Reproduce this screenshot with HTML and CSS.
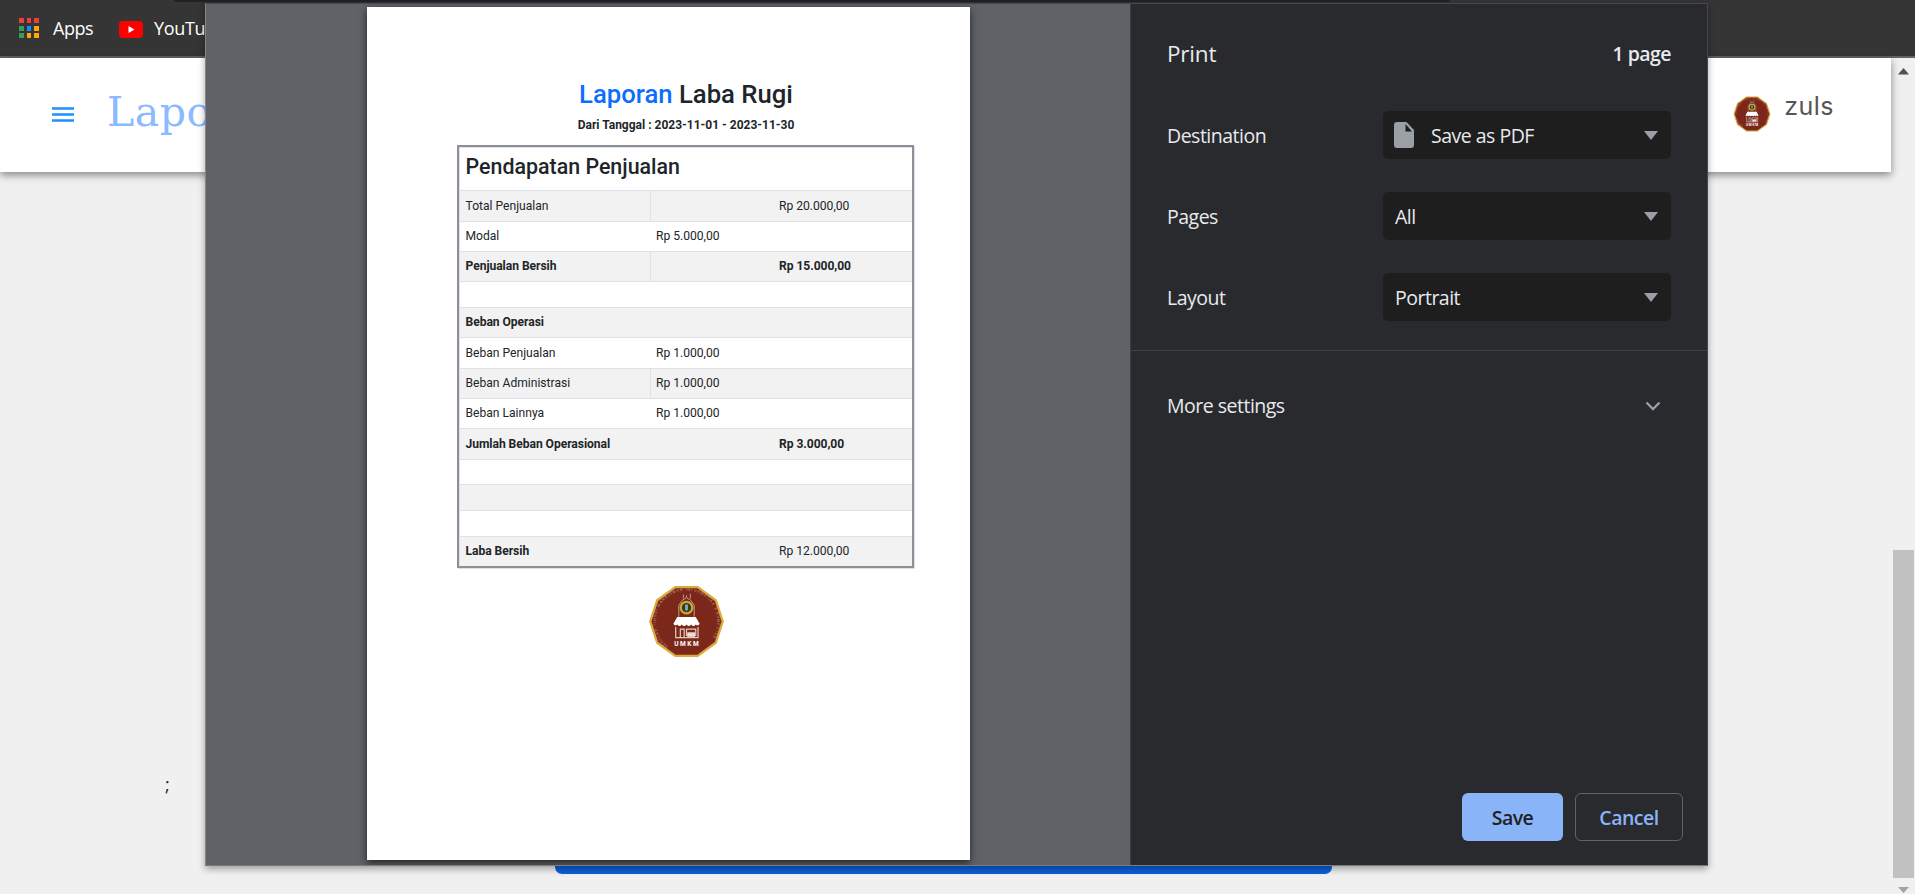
FILE: index.html
```html
<!DOCTYPE html>
<html lang="id">
<head>
<meta charset="utf-8">
<title>Laporan Laba Rugi</title>
<link rel="stylesheet" href="styles.css">
</head>
<body>
<div class="screen">
  <div class="bookmarks">
    <svg class="apps" width="20" height="21" viewBox="0 0 20 21">
      <path d="M0 0h5v5H0zM8 0h4v5H8zM15 0h5v5h-5z" fill="#ee3e38"/>
      <path d="M0 8h5v5H0zM0 15h5v5H0z" fill="#34a056"/>
      <path d="M8 8h4v5H8z" fill="#1a8cff"/>
      <path d="M15 8h5v5h-5zM8 15h4v5H8zM15 15h5v5h-5z" fill="#faa80a"/>
    </svg>
    <span class="bm-apps">Apps</span>
    <svg class="yt" width="24" height="17" viewBox="0 0 24 17"><rect width="24" height="17" rx="4" fill="#f00"/><path d="M9.500 5v7l6-3.500z" fill="#fff"/></svg>
    <span class="bm-yt">YouTube</span>
  </div>
  <div class="viewport">
    <div class="site">
      <header class="topbar">
        <div class="brand">
          <svg width="22" height="15" viewBox="0 0 22 15"><path d="M0 1.500h22M0 7.500h22M0 13.500h22" stroke="#1e90ff" stroke-width="2.400"/></svg>
          <span class="brand-name">Laporan</span>
        </div>
        <div class="user"><svg width="38" height="38" viewBox="0 0 100 100"><use href="#logo"/></svg><span>zuls</span></div>
      </header>
      <div class="stray">;</div>
      <div class="submit"></div>
    </div>
    <div class="scrollbar">
      <svg width="11" height="7" viewBox="0 0 11 7"><path d="M0 6.500L5.500 0L11 6.500z" fill="#505050"/></svg>
      <div class="thumb"></div>
      <svg class="down" width="11" height="6" viewBox="0 0 11 6"><path d="M0 0L5.500 6L11 0z" fill="#a3a3a3"/></svg>
    </div>
  </div>
  <div class="tabstrip"></div>
  <div class="dialog">
    <div class="preview">
      <div class="sheet">
        <h1><span>Laporan</span> Laba Rugi</h1>
        <p class="range">Dari Tanggal : 2023-11-01 - 2023-11-30</p>
        <div class="ledger">
          <div class="row head">Pendapatan Penjualan</div>
          <div class="row h31 odd split"><span>Total Penjualan</span><span></span><span>Rp 20.000,00</span></div>
          <div class="row h30"><span>Modal</span><span>Rp 5.000,00</span><span></span></div>
          <div class="row h30 odd split bold"><span>Penjualan Bersih</span><span></span><span>Rp 15.000,00</span></div>
          <div class="row h26"></div>
          <div class="row h30 odd bold"><span>Beban Operasi</span></div>
          <div class="row h31"><span>Beban Penjualan</span><span>Rp 1.000,00</span><span></span></div>
          <div class="row h30 odd split"><span>Beban Administrasi</span><span>Rp 1.000,00</span><span></span></div>
          <div class="row h30"><span>Beban Lainnya</span><span>Rp 1.000,00</span><span></span></div>
          <div class="row h31 odd bold"><span>Jumlah Beban Operasional</span><span></span><span>Rp 3.000,00</span></div>
          <div class="row h25"></div>
          <div class="row h26 odd"></div>
          <div class="row h26"></div>
          <div class="row last odd"><span class="strong">Laba Bersih</span><span></span><span>Rp 12.000,00</span></div>
        </div>
        <svg class="seal" width="77" height="77" viewBox="0 0 100 100">
          <g id="logo">
            <polygon points="97,50 88,77.600 64.500,94.700 35.500,94.700 12,77.600 3,50 12,22.400 35.500,5.300 64.500,5.300 88,22.400" fill="#7b281b" stroke="#dba93c" stroke-width="3"/>
            <path id="ring" d="M26 82A40 40 0 1 1 74 82" fill="none"/>
            <text font-size="4.800" fill="#c08f80" font-family="Roboto, sans-serif" textLength="184"><textPath href="#ring">SEKOLAH TINGGI MANAJEMEN INFORMATIKA &amp; KOMPUTER</textPath></text>
            <path d="M40 44V29Q44 21 50 19Q56 21 60 29V44M46 20V15M55 20V14M50 19V16" fill="none" stroke="#c9a294" stroke-width="1.200"/>
            <circle cx="50" cy="32" r="7.500" fill="#31362d" stroke="#c9ad29" stroke-width="3"/>
            <path d="M48 28h4v6l-2 3l-2-3z" fill="#8aa0ac"/>
            <path d="M38 44H62L67 53Q65 57 62 54Q59 58 56 54Q53 58 50 54Q47 58 44 54Q41 58 38 54Q35 57 33 53Z" fill="#fff"/>
            <path d="M36 57V71H65V57M42 71V60H47V71M50 60H62V68H50Z" fill="none" stroke="#e3c8bf" stroke-width="1.600"/>
            <path d="M51 64H61V70H51Z" fill="#efdcd5"/>
            <text x="50" y="82" text-anchor="middle" font-size="8.500" font-weight="700" fill="#fff" font-family="Roboto, sans-serif" textLength="32">UMKM</text>
          </g>
        </svg>
      </div>
    </div>
    <div class="settings">
      <div class="title"><span class="print">Print</span><span class="count">1 page</span></div>
      <div class="fields">
        <div class="field"><span>Destination</span><div class="select">
          <svg class="file" width="20" height="26" viewBox="0 0 20 26"><path d="M3 0H12.500L20 8V23Q20 26 17 26H3Q0 26 0 23V3Q0 0 3 0zM11.500 2V9.500H18z" fill="#9aa0a6" fill-rule="evenodd"/></svg>
          <span>Save as PDF</span><i class="caret"></i></div></div>
        <div class="field"><span>Pages</span><div class="select"><span>All</span><i class="caret"></i></div></div>
        <div class="field"><span>Layout</span><div class="select"><span>Portrait</span><i class="caret"></i></div></div>
      </div>
      <div class="more"><span>More settings</span><svg width="16" height="10" viewBox="0 0 16 10"><path d="M1.500 1.500L8 8L14.500 1.500" fill="none" stroke="#9aa0a6" stroke-width="2.300"/></svg></div>
      <div class="actions"><div class="btn save"><span>Save</span></div><div class="btn cancel"><span>Cancel</span></div></div>
    </div>
  </div>
</div>
</body>
</html>
```
FILE: styles.css
```css
* { box-sizing: border-box; }
body { margin: 0; font-family: "Open Sans", "Noto Sans", sans-serif; }
svg { display: block; flex: none; }
.screen { position: relative; width: 1915px; height: 894px; overflow: hidden; display: flex; flex-direction: column; background: #f0f0f0; }

.bookmarks { height: 58px; flex: none; display: flex; align-items: center; background: #353535; border-bottom: 2px solid #626262; color: #fff; font-size: 18px; padding-left: 19px; }
.bm-apps { margin-left: 14px; width: 66px; letter-spacing: -0.5px; }
.yt { margin: 2px 11px 0 0; }
.bm-yt { letter-spacing: -0.35px; }

.viewport { flex: 1; display: flex; }
.site { width: 1891px; display: flex; flex-direction: column; }
.topbar { height: 114px; flex: none; display: flex; justify-content: space-between; background: #fff; box-shadow: 0 3px 8px rgba(0,0,0,.45); }
.brand { display: flex; align-items: center; padding: 0 0 2px 52px; }
.brand-name { margin: -5px 0 0 33px; font: 41px "DejaVu Serif", serif; letter-spacing: .5px; color: #8bbaff; }
.user { display: flex; align-items: flex-start; padding: 37px 57px 0 0; color: #555; font: 25px Inter, sans-serif; }
.user span { margin: -4px 0 0 13px; letter-spacing: .5px; }
.stray { margin: 597px 0 0 165px; height: 30px; font-size: 18px; line-height: 30px; color: #212529; }
.submit { width: 777px; height: 54px; margin: 21px 0 0 555px; border-radius: 7px; background: #0d60dc; }

.scrollbar { flex: 1; display: flex; flex-direction: column; align-items: center; padding: 10px 1px 0 2px; }
.thumb { width: 21px; height: 328px; margin-top: 475px; background: #c1c1c1; }
.down { margin-top: 9px; }

.tabstrip { position: absolute; left: 174px; top: 0; width: 1276px; height: 2px; background: #202124; border-radius: 0 0 8px 8px; }
.dialog { position: absolute; left: 205px; top: 3px; width: 1503px; height: 863px; display: flex; background: #292a2d; border: 1px solid #45484a; border-left-color: #84878a; border-bottom-color: #797c7e; box-shadow: 0 3px 7px rgba(0,0,0,.35); }

.preview { width: 924px; overflow: hidden; padding: 3px 0 0 161px; background: #5f6368; }
.sheet { width: 603px; height: 853px; padding: 71px 0 0 90px; background: #fff; box-shadow: 0 3px 8px rgba(0,0,0,.65); font-family: Roboto, sans-serif; color: #212529; }
.sheet h1 { margin: 0; width: 458px; text-align: center; font-size: 25.700px; line-height: 32px; font-weight: 500; }
.sheet h1 span { color: #0d6efd; }
.range { margin: 8px 0 0; width: 458px; text-align: center; font-size: 12px; line-height: 14px; font-weight: 700; }
.ledger { width: 457px; margin-top: 13px; border: 2px solid #8c9096; box-shadow: 1px 1px 0 #dee2e6, inset 1px 0 0 #dee2e6; padding-left: 1px; font-size: 12.100px; }
.row { display: grid; grid-template-columns: 191px 123px 1fr; align-items: stretch; border-bottom: 1px solid #dee2e6; }
.row span { display: flex; align-items: center; padding: 0 0 1px 5.500px; }
.row span + span { padding-left: 5px; }
.row.split span:first-child { border-right: 1px solid #dee2e6; }
.odd { background: #f2f2f2; }
.bold, .strong { font-weight: 700; letter-spacing: -.05px; }
.head { display: block; height: 44px; padding: 3px 0 0 5.500px; font-size: 21.400px; line-height: 32px; font-weight: 500; border-top: 1px solid #dee2e6; }
.h31 { height: 31px; } .h30 { height: 30px; } .h26 { height: 26px; } .h25 { height: 25px; }
.last { height: 29px; border-bottom: 0; }
.seal { margin: 15px 0 0 191px; }

.settings { flex: 1; display: flex; flex-direction: column; border-left: 1px solid #3b3d40; color: #e8eaed; font-size: 19.500px; }
.title { display: flex; justify-content: space-between; align-items: center; height: 98px; padding: 0 36px 0 36px; }
.print { font-size: 22.500px; letter-spacing: -.2px; }
.count { font-weight: 600; letter-spacing: -.55px; }
.fields { display: flex; flex-direction: column; gap: 33px; padding: 9px 36px 29px 36px; border-bottom: 1px solid #3f4145; }
.field { display: flex; justify-content: space-between; align-items: center; }
.select { width: 288px; height: 48px; display: flex; align-items: center; padding: 0 12px; border-radius: 5px; background: #1e1e1f; }
.file { margin: 0 17px 0 -1px; }
.caret { margin: 1px 1px 0 auto; border: 7.500px solid transparent; border-top: 9px solid #9aa0a6; border-bottom: 0; }
.more { display: flex; justify-content: space-between; align-items: center; height: 109px; padding: 0 46px 0 36px; }
.actions { margin-top: auto; display: flex; justify-content: flex-end; gap: 12px; padding: 0 24px 24px 0; }
.btn { height: 48px; display: flex; align-items: center; justify-content: center; border-radius: 6px; font-weight: 600; }
.save { width: 101px; background: #8ab4f8; color: #202124; }
.cancel { width: 108px; border: 1px solid #5f6368; color: #8ab4f8; }
.field > span, .select span, .more span, .btn span { letter-spacing: -.5px; }
```
